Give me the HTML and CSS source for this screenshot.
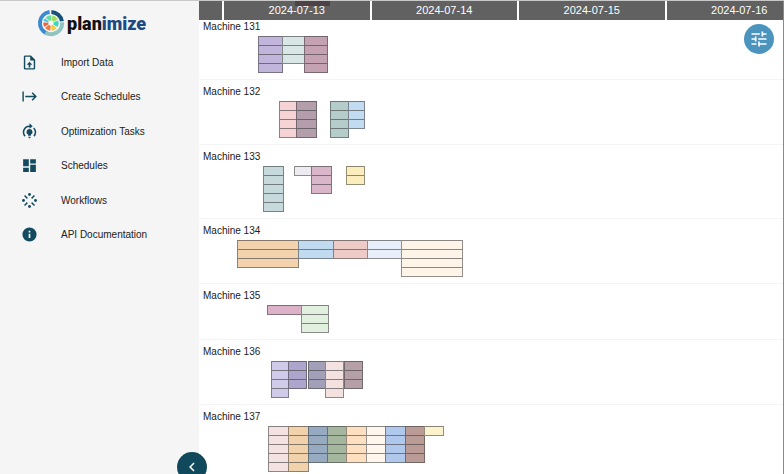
FILE: index.html
```html
<!DOCTYPE html>
<html lang="en">
<head>
  <meta charset="UTF-8" />
  <meta name="viewport" content="width=device-width, initial-scale=1.0"/>
  <title>planimize | Schedules</title>
  <link rel="stylesheet" href="styles.css">
</head>
<body>

  <aside class="sidebar">
    <a href="#" class="logo">
      <svg viewBox="0 0 28 28" width="28" height="28" fill="none" aria-hidden="true">
        <g stroke-width="4">
          <path d="M9.9 24.3A11.1 11.1 0 0 1 12.6 3" stroke="#3e8ad0"/>
          <path d="M14.4 2.9A11.1 11.1 0 0 1 24.9 12.2" stroke="#17527a"/>
          <path d="M25.1 13.4A11.1 11.1 0 0 1 8.4 23.6" stroke="#8fc4c0"/>
        </g>
        <g stroke-width="5">
          <path d="M10.4 10.3A5.2 5.2 0 0 1 14.2 8.800" stroke="#5fe0a0"/>
          <path d="M15 8.900A5.2 5.2 0 0 1 18.6 11.6" stroke="#9be15a"/>
          <path d="M18.9 12.4A5.2 5.2 0 0 1 18.4 16.8" stroke="#3fd6c0"/>
          <path d="M17.8 17.5A5.2 5.2 0 0 1 14.4 19.2" stroke="#f5cc3d"/>
          <path d="M13.5 19.2A5.2 5.2 0 0 1 10 17.3" stroke="#f47b35"/>
          <path d="M9.5 16.6A5.2 5.2 0 0 1 8.800 13.6" stroke="#f2603c"/>
          <path d="M8.900 12.8A5.2 5.2 0 0 1 9.9 10.9" stroke="#43c6e8"/>
        </g>
      </svg>
      <span class="logo-text">plan<span>imize</span></span>
    </a>

    <nav>
      <ul class="menu">
        <li><a href="#">
          <svg class="icon" viewBox="0 0 24 24"><path d="M14 2H6a2 2 0 0 0-2 2v16a2 2 0 0 0 2 2h12a2 2 0 0 0 2-2V8l-6-6m4 18H6V4h7v5h5v11M12 11l4 4h-2.8v4h-2.4v-4H8l4-4Z"/></svg>
          Import Data
        </a></li>
        <li><a href="#">
          <svg class="icon" viewBox="0 0 24 24"><path d="M2 5h2v14H2V5m14.5 1 5.9 6-5.9 6-1.5-1.5 3.4-3.4H6v-2.2h12.400L15 7.500 16.500 6Z"/></svg>
          Create Schedules
        </a></li>
        <li><a href="#">
          <svg class="icon" viewBox="0 0 24 24"><path d="M12 8.500a4.200 4.200 0 0 0-2 7.900V18h4v-1.600a4.200 4.200 0 0 0-2-7.900M10.500 19.300h3v1.200L12 22l-1.500-1.500ZM12 0.500 16.500 4.700 12 8V5.700a7.300 7.300 0 0 0-5.500 12.100L5 19.300A9.400 9.400 0 0 1 12 3.500ZM18.600 6.200 17.100 7.700a7.300 7.300 0 0 1 .4 10.100L19 19.300a9.400 9.400 0 0 0-.4-13.100Z"/></svg>
          Optimization Tasks
        </a></li>
        <li><a href="#">
          <svg class="icon" viewBox="0 0 24 24"><path d="M3 13h8V3H3v10zm0 8h8v-6H3v6zm10 0h8V11h-8v10zm0-18v6h8V3h-8z"/></svg>
          Schedules
        </a></li>
        <li><a href="#">
          <svg class="icon" viewBox="0 0 24 24">
            <circle cx="12" cy="3.500" r="2"/><circle cx="12" cy="20.500" r="2"/>
            <circle cx="3.500" cy="12" r="2"/><circle cx="20.500" cy="12" r="2"/>
            <path class="spokes" d="M5 5 9 9M19 5 15 9M5 19 9 15M19 19 15 15"/>
          </svg>
          Workflows
        </a></li>
        <li><a href="#">
          <svg class="icon" viewBox="0 0 24 24"><path d="M12 2a10 10 0 1 0 0 20 10 10 0 0 0 0-20zm1.200 15h-2.400v-6h2.400v6zm0-8h-2.400V6.700h2.400V9z"/></svg>
          API Documentation
        </a></li>
      </ul>
    </nav>

    <button class="collapse-btn" type="button" aria-label="Collapse menu">
      <svg viewBox="0 0 24 24" width="18" height="18"><path d="M15.400 7.400 14 6l-6 6 6 6 1.400-1.400-4.600-4.600z"/></svg>
    </button>
  </aside>

  <main class="chart">
    <div class="timeline">
      <div class="marker"></div>
      <div class="day"></div>
      <div class="day"><span>2024-07-13</span></div>
      <div class="day"><span>2024-07-14</span></div>
      <div class="day"><span>2024-07-15</span></div>
      <div class="day"><span>2024-07-16</span></div>
    </div>
    <div class="rows" id="rows"></div>
    <button class="settings-btn" type="button" aria-label="Settings">
      <svg viewBox="0 0 24 24" width="20" height="20"><path d="M3 17v2h6v-2H3zM3 5v2h10V5H3zm10 16v-2h8v-2h-8v-2h-2v6h2zM7 9v2H3v2h4v2h2V9H7zm14 4v-2H11v2h10zm-6-4h2V7h4V5h-4V3h-2v6z"/></svg>
    </button>
  </main>

  <script src="app.js"></script>
</body>
</html>
```

FILE: styles.css
```css
* {
  box-sizing: border-box;
  margin: 0;
  padding: 0;
}

body {
  display: flex;
  height: 100vh;
  overflow: hidden;
  background: #fff;
  color: #212121;
  font-family: "Liberation Sans", Arial, sans-serif;
  font-size: 10px;
  border-top: 1px solid #c8c8c8;
}

button {
  display: flex;
  align-items: center;
  justify-content: center;
  width: 30px;
  height: 30px;
  border: none;
  border-radius: 50%;
  cursor: pointer;
}

button svg {
  fill: #fff;
}

/* sidebar */
.sidebar {
  position: relative;
  z-index: 2;
  flex: 0 0 199px;
  background: #f5f5f5;
}

.logo {
  display: flex;
  align-items: center;
  gap: 2px;
  height: 44px;
  padding-left: 37px;
  text-decoration: none;
}

.logo-text {
  color: #111;
  font-family: Roboto, sans-serif;
  font-size: 18px;
  font-weight: 900;
}

.logo-text span {
  color: #1d4a82;
}

.menu {
  display: grid;
  grid-auto-rows: 1fr;
  height: 207px;
  list-style: none;
}

.menu a {
  display: flex;
  align-items: center;
  gap: 23px;
  height: 100%;
  padding-left: 21px;
  color: #212121;
  text-decoration: none;
}

.icon {
  width: 17px;
  height: 17px;
  fill: #134a60;
}

.spokes {
  stroke: #134a60;
  stroke-width: 2;
}

.collapse-btn {
  position: absolute;
  right: -8px;
  bottom: -8px;
  background: #10495b;
}

/* gantt chart */
.chart {
  position: relative;
  flex: 1;
  min-width: 0;
  overflow: hidden;
  border-right: 1px solid #8a8a8a;
}

.timeline {
  position: relative;
  z-index: 1;
  display: grid;
  grid-template-columns: 25px repeat(4, 1fr);
  width: 615px;
  height: 19px;
}

.day {
  background: #616161;
  border-right: 2px solid #fff;
  color: #fff;
  font-size: 11px;
  line-height: 18px;
  text-align: center;
}

.day span {
  position: relative;
}

.marker {
  position: absolute;
  top: 0;
  left: 96px;
  width: 35px;
  height: 5px;
  background: #4d4347;
}

.settings-btn {
  position: absolute;
  top: 23px;
  right: 9px;
  background: #4b94be;
}

/* first row slides a little under the timeline */
.rows {
  margin-top: -5px;
}

.row {
  padding: 4px 0 6px;
  border-bottom: 1px solid #f4f4f4;
}

.row-label {
  margin-bottom: 1px;
  padding-left: 4px;
  font-weight: normal;
  font-size: 10px;
  line-height: 16px;
}

.lane {
  display: flex;
  align-items: flex-start;
}

.stack {
  flex: none;
  margin-right: -1px;
  border: 1px solid rgba(60, 60, 60, 0.55);
  border-top: none;
}

.task {
  height: 9px;
  border-top: 1px solid rgba(60, 60, 60, 0.6);
}
```

FILE: app.js
```js
// each stack: [start, end, number of tasks, colour], offsets from the left of the timeline
const machines = [
  { name: 'Machine 131', stacks: [[59, 83, 4, '#c1b5dc'], [83, 105, 3, '#d8e6e6'], [105, 128, 4, '#c5a2b1']] },
  { name: 'Machine 132', stacks: [[80, 97, 4, '#f6d3d4'], [97, 117, 4, '#b49eac'], [131, 149, 4, '#b4cdcb'], [149, 165, 3, '#c3dbf1']] },
  { name: 'Machine 133', stacks: [[64, 84, 5, '#c6dadd'], [95, 112, 1, '#edeaf1'], [112, 132, 3, '#d9b6c9'], [147, 165, 2, '#fcedbd']] },
  { name: 'Machine 134', stacks: [[38, 99, 3, '#f2d3ae'], [99, 134, 2, '#c0daef'], [134, 168, 2, '#efcbc7'], [168, 202, 2, '#e9eefb'], [202, 263, 4, '#fff4e8']] },
  { name: 'Machine 135', stacks: [[68, 102, 1, '#dbb2c7'], [102, 129, 3, '#e2f0df']] },
  { name: 'Machine 136', stacks: [[72, 89, 4, '#cfcbe8'], [89, 107, 3, '#aea5cd'], [109, 126, 3, '#a29fb8'], [126, 144, 4, '#f4e2e0'], [145, 163, 3, '#b5a0a8']] },
  { name: 'Machine 137', stacks: [[69, 89, 5, '#f4e1e2'], [89, 109, 5, '#f2d2ab'], [109, 128, 4, '#96aac2'], [128, 147, 4, '#a4b69d'], [147, 167, 4, '#fedfc0'], [167, 186, 4, '#fff6ed'], [186, 206, 4, '#b0c8ec'], [206, 225, 4, '#bb9b95'], [225, 244, 1, '#fcf2cb']] }
];

const rows = document.getElementById('rows');

machines.forEach(machine => {
  const row = document.createElement('section');
  row.className = 'row';
  row.innerHTML = `<h2 class="row-label">${machine.name}</h2>`;

  const lane = document.createElement('div');
  lane.className = 'lane';
  let last = 0;

  machine.stacks.forEach(([start, end, count, color]) => {
    const stack = document.createElement('div');
    stack.className = 'stack';
    stack.style.marginLeft = `${start - last}px`;
    stack.style.width = `${end - start + 1}px`;
    stack.style.backgroundColor = color;
    stack.innerHTML = '<div class="task"></div>'.repeat(count);
    lane.appendChild(stack);
    last = end;
  });

  row.appendChild(lane);
  rows.appendChild(row);
});
```
